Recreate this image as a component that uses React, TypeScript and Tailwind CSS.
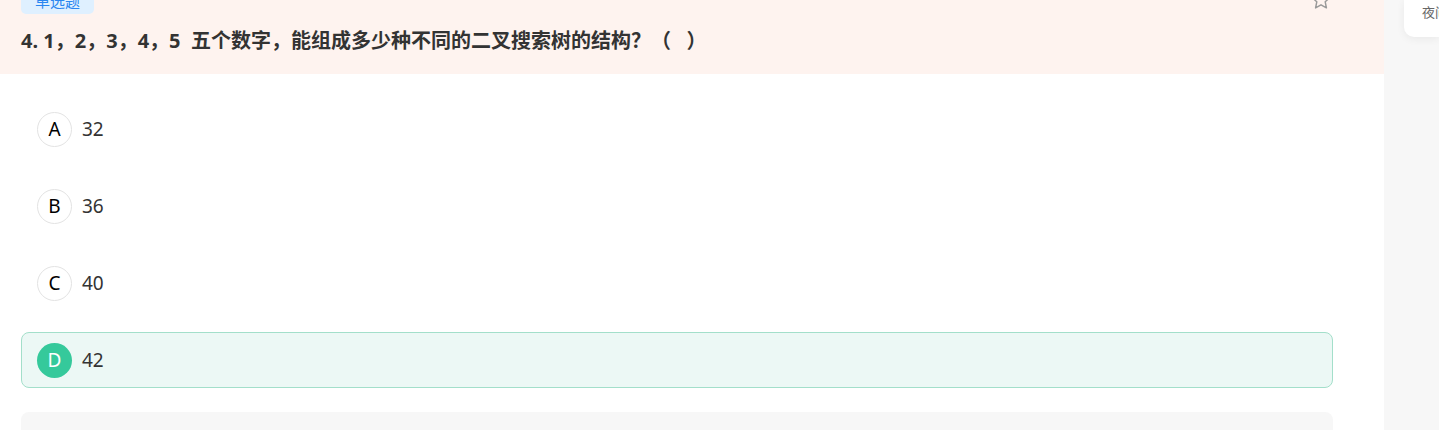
import React from "react";

const font = { fontFamily: '"Noto Sans", "Noto Sans CJK SC", sans-serif' };

function Star() {
  return (
    <svg width="22" height="22" viewBox="0 0 24 24" fill="none" stroke="#999" strokeWidth="1.6" strokeLinejoin="round">
      <path d="M12 2.5l2.9 6.1 6.6.8-4.9 4.6 1.3 6.6L12 17.3l-5.9 3.3 1.3-6.6-4.9-4.6 6.6-.8z" />
    </svg>
  );
}

function P({ c, align = "left" }: { c: string; align?: "left" | "right" }) {
  return (
    <span className={"inline-block w-[1em] " + (align === "right" ? "text-right" : "text-left")}>{c}</span>
  );
}

function Option({ letter, text, correct }: { letter: string; text: string; correct?: boolean }) {
  return (
    <div
      className={
        "flex items-center h-[56px] shrink-0 rounded-[8px] border pl-[15px] " +
        (correct ? "border-[#a3dfca] bg-[#ecf8f5]" : "border-transparent")
      }
    >
      <div
        className={
          "w-[35px] h-[35px] rounded-full flex items-center justify-center text-[19px] " +
          (correct ? "bg-[#35c99b] text-white" : "border border-[#e3e3e3] text-black")
        }
      >
        {letter}
      </div>
      <div className="ml-[10px] text-[19px] text-[#333]">{text}</div>
    </div>
  );
}

export default function App() {
  return (
    <div className="flex w-[1439px] h-[430px] overflow-hidden bg-[#f7f7f7]" style={font}>
      <div className="w-[1384px] shrink-0 bg-white flex flex-col">
        <div className="h-[74px] shrink-0 bg-[#fef3ef] px-[21px] relative">
          <div className="absolute left-[21px] top-[-12px] h-[26px] w-[73px] rounded-[5px] bg-[#dff0ff] text-[#2a86f0] text-[15px] flex items-center justify-center">
            单选题
          </div>
          <div className="absolute left-[1310px] top-[-11px]">
            <Star />
          </div>
          <div className="pt-[28px] text-[20px] font-bold text-[#333] leading-[26px] whitespace-pre">
            4.{" "}1<P c="，" />2<P c="，" />3<P c="，" />4<P c="，" />5{"  "}五个数字<P c="，" />能组成多少种不同的二叉搜索树的结构<P c="？" />
            <P c="（" align="right" />{"   "}<P c="）" />
          </div>
        </div>
        <div className="pl-[21px] pr-[51px] pt-[27px] flex flex-col gap-[21px] shrink-0">
          <Option letter="A" text="32" />
          <Option letter="B" text="36" />
          <Option letter="C" text="40" />
          <Option letter="D" text="42" correct />
        </div>
        <div className="ml-[21px] mr-[51px] mt-[24px] h-[60px] shrink-0 rounded-[8px] bg-[#f7f7f7]" />
      </div>
      <div className="flex-1 min-w-0 overflow-hidden pl-[20px]">
        <div className="h-[37px] bg-white rounded-bl-[10px] shadow-[0_2px_8px_rgba(0,0,0,0.06)] overflow-hidden pl-[18px] pt-[3px] text-[13px] text-[#666] whitespace-nowrap">
          夜间模式
        </div>
      </div>
    </div>
  );
}
